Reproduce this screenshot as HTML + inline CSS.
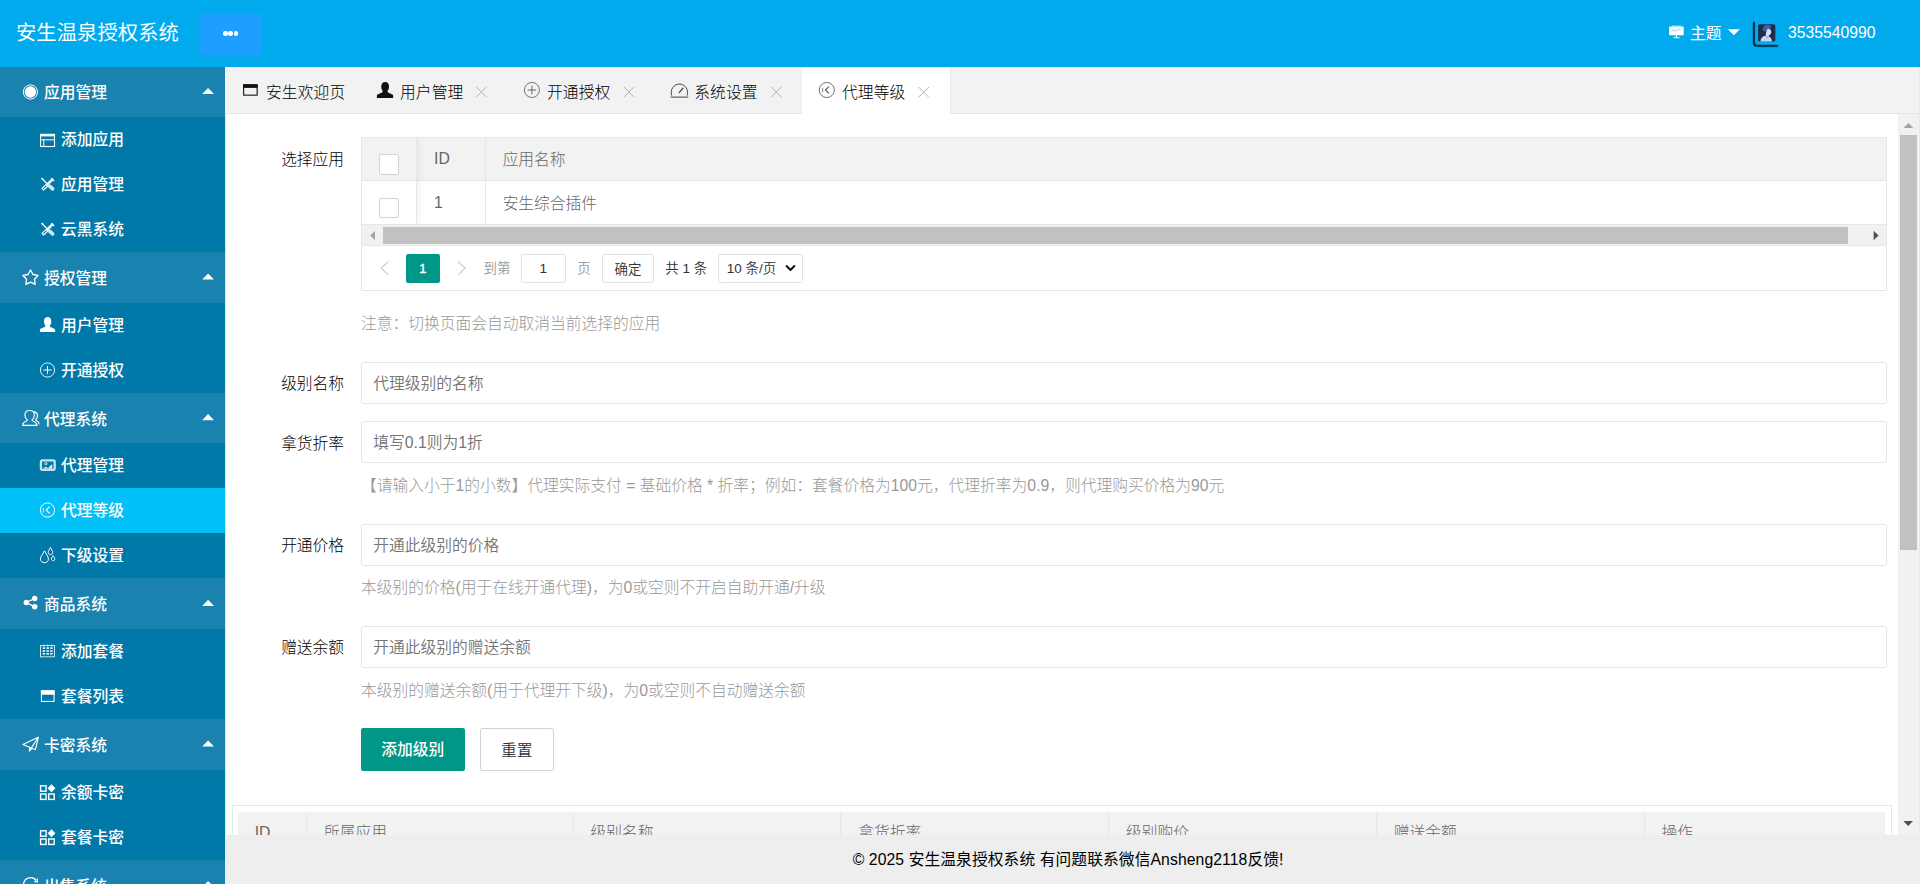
<!DOCTYPE html>
<html lang="zh-CN">
<head>
<meta charset="utf-8">
<title>安生温泉授权系统</title>
<style>
*{box-sizing:border-box;margin:0;padding:0}
html{width:1920px;height:884px;overflow:hidden;background:#fff}
body{zoom:1.125;width:1706.67px;height:785.78px;overflow:hidden;position:relative;font-family:"Liberation Sans","Noto Sans CJK SC",sans-serif;font-size:14px;line-height:24px;color:#000}
svg{display:block}
/* header */
#hd{position:absolute;left:0;top:0;width:1706.67px;height:59.7px;background:#01aaed;color:#fff;z-index:5}
#logo{position:absolute;left:14.2px;letter-spacing:.1px;top:0;height:60px;line-height:58.8px;font-size:18px;white-space:nowrap}
#more{position:absolute;left:177.8px;top:11.6px;width:54px;height:37.3px;background:#1e9fff;border-radius:2px}
#more i{position:absolute;top:16.1px;width:3.9px;height:3.9px;border-radius:50%;background:#fff}
#theme{position:absolute;left:1502.2px;top:0;line-height:60px;font-size:14px;white-space:nowrap}
#uname{position:absolute;left:1589.3px;top:0;line-height:59.4px;font-size:14px;white-space:nowrap}
/* sidebar */
#side{position:absolute;left:0;top:59px;width:200px;height:727px;background:#0078a8;color:#fff;overflow:hidden}
.p{position:relative;height:45px;line-height:48.3px;overflow:hidden;background:#1982ae;padding-left:39.1px;font-size:14px;white-space:nowrap;margin-bottom:0}
.c{position:relative;height:40px;line-height:40.9px;overflow:hidden;padding-left:54.2px;font-size:14px;white-space:nowrap}
.c.on{background:#00c0f7}
/* tabs */
#tabs{position:absolute;left:200px;top:59.7px;width:1506.67px;height:41.3px;background:#f2f2f2;border-bottom:1px solid #e6e6e6}
.tab{position:absolute;top:0;height:41px;line-height:45.6px;overflow:hidden;font-size:14px;color:#000;white-space:nowrap;letter-spacing:.12px}
#tabon{position:absolute;left:512px;top:1px;width:133.2px;height:41.3px;background:#fff;border-left:1px solid #eee;border-right:1px solid #e6e6e6}
/* content */
#main{position:absolute;left:200px;top:101px;width:1506.67px;height:641.3px;background:#fff;border-left:1px solid #e6e6e6;overflow:hidden}
#foot{position:absolute;left:200px;top:742.2px;width:1506.67px;height:44px;background:#eee;text-align:center;line-height:44px;font-size:14px;color:#000;padding-right:7.8px;letter-spacing:.07px}

/* form */
#form{position:absolute;left:10px;top:21px;width:1466.4px}
.item{position:relative;margin-bottom:15px;min-height:38px}
.item:after{content:"";display:block;clear:both}
.lab{position:absolute;left:0;top:0;width:110px;padding:10.1px 15px 7.3px;line-height:20px;text-align:right;color:#000;font-size:14px}
.blk{margin-left:110px;min-height:36px}
.inp{display:block;width:100%;height:37.4px;margin-bottom:.6px;line-height:38.2px;overflow:hidden;border:1px solid #e6e6e6;border-radius:2px;background:#fff;padding-left:10px;font-size:14px;color:#757575}
.mid{display:block;padding:9.9px 0 8.1px;line-height:20px;color:#999;font-size:14px;white-space:nowrap}
.btn{display:inline-block;vertical-align:top;height:38px;margin-top:-.4px;line-height:39.8px;overflow:hidden;padding:0 18px;background:#009688;color:#fff;font-size:14px;border-radius:2px;white-space:nowrap}
.btn.pri{background:#fff;color:#333;border:1px solid #d2d2d2;line-height:39.4px;margin-left:13.6px}
/* table 1 */
#tv{position:relative;border:1px solid #e6e6e6;height:136.8px;margin-bottom:9.6px;color:#666;font-size:14px;background:#fff}
#tv .hr{position:absolute;left:0;top:0;right:0;height:37.9px;background:#f2f2f2;border-bottom:1px solid #e6e6e6}
#tv .r1{position:absolute;left:0;top:37.9px;right:0;height:38.9px;border-bottom:1px solid #e6e6e6}
#tv .cell{position:absolute;top:0;bottom:0;line-height:37.4px;padding-left:15px;border-right:1px solid #e6e6e6;white-space:nowrap}
#tv .cb{position:absolute;left:15.2px;width:18px;height:18px;border:1px solid #d2d2d2;border-radius:2px;background:#fff}
#tv .sb{position:absolute;left:0;right:0;top:76.8px;height:18.1px;background:#f1f1f1}
#tv .sb .th{position:absolute;left:19px;right:34px;top:2px;height:15.1px;background:#c1c1c1}
#tv .pg{position:absolute;left:0;right:0;top:94.9px;height:39.9px;border-top:1px solid #e6e6e6;font-size:12px;color:#333}
#tv .pg>*{position:absolute;top:7px;height:26px;line-height:26px;white-space:nowrap}
/* card */
#card{position:absolute;left:5.2px;top:614.5px;width:1476px;height:80px;border:1px solid #e6e6e6}
#card .hd2{position:absolute;left:4.4px;top:5.3px;width:1464.6px;height:39px;background:#f2f2f2;color:#666;font-size:14px}
#card .hd2 span{position:absolute;top:0;height:39px;line-height:38px;padding-left:15px;border-right:1px solid #e6e6e6;white-space:nowrap}
/* scrollbar */
#vs{position:absolute;left:1486.3px;top:0;width:18.6px;height:642px;background:#f1f1f1}
#vs .th{position:absolute;left:1.6px;top:19px;width:15.1px;height:368.5px;background:#c1c1c1}
#vline{position:absolute;left:1705.8px;top:59.7px;width:1px;height:682.5px;background:#e9e9e9;z-index:4}
#tv .fx{position:absolute;left:0;top:0;width:49px;height:76.8px;box-shadow:0 -1px 8px rgba(0,0,0,.08);clip-path:inset(0 -12px 0 0);pointer-events:none}
#tv .r1 .cell{line-height:39.8px}
.z{position:relative;top:1.1px}
#main{font-weight:350}
#tv .hr,#tv .r1,#card,.mid{font-weight:300}
.lab,#tabs{font-weight:300}
#side{font-weight:500}
.btn{font-weight:500}
.btn.pri{font-weight:350}
</style>
</head>
<body>
<div id="hd">
  <div id="logo">安生温泉授权系统</div>
  <div id="more"><i style="left:20.55px"></i><i style="left:25.25px"></i><i style="left:29.95px"></i></div>
  <div id="theme">主题</div>
  <div id="uname">3535540990</div>
</div>
<div id="side">
  <div class="p">应用管理</div>
  <div class="c">添加应用</div>
  <div class="c">应用管理</div>
  <div class="c">云黑系统</div>
  <div class="p">授权管理</div>
  <div class="c">用户管理</div>
  <div class="c">开通授权</div>
  <div class="p">代理系统</div>
  <div class="c">代理管理</div>
  <div class="c on">代理等级</div>
  <div class="c">下级设置</div>
  <div class="p">商品系统</div>
  <div class="c">添加套餐</div>
  <div class="c">套餐列表</div>
  <div class="p">卡密系统</div>
  <div class="c">余额卡密</div>
  <div class="c">套餐卡密</div>
  <div class="p">出售系统</div>
</div>
<div id="tabs">
  <div id="tabon"></div>
  <div class="tab" style="left:36.4px">安生欢迎页</div>
  <div class="tab" style="left:155.5px">用户管理</div>
  <div class="tab" style="left:286.2px">开通授权</div>
  <div class="tab" style="left:417px">系统设置</div>
  <div class="tab" style="left:548.4px">代理等级</div>
</div>
<div id="main">
  <div id="form">
    <div class="item">
      <div class="lab">选择应用</div>
      <div class="blk">
        <div id="tv">
          <div class="hr">
            <div class="cell" style="left:0;width:49px"><span class="cb" style="top:13.7px;height:18.8px"></span></div>
            <div class="cell" style="left:49px;width:61px">ID</div>
            <div class="cell" style="left:110px;width:1245px;border-right:0"><span class="z">应用名称</span></div>
          </div>
          <div class="r1">
            <div class="cell" style="left:0;width:49px"><span class="cb" style="top:15.3px"></span></div>
            <div class="cell" style="left:49px;width:61px">1</div>
            <div class="cell" style="left:110px;width:1245px;border-right:0"><span class="z">安生综合插件</span></div>
          </div>
          <div class="fx"></div>
          <div class="sb"><div class="th"></div></div>
          <div class="pg">
            <span style="left:38.9px;width:30.3px;background:#009688;color:#fff;text-align:center;border-radius:2px;-webkit-text-stroke:.3px #fff">1</span>
            <span style="left:108.1px;color:#999">到第</span>
            <span style="left:141.1px;width:40px;border:1px solid #e2e2e2;border-radius:2px;text-align:center;line-height:24px">1</span>
            <span style="left:191.3px;color:#999">页</span>
            <span style="left:213.1px;width:46.9px;border:1px solid #e2e2e2;border-radius:2px;text-align:center;line-height:27.4px;overflow:hidden">确定</span>
            <span style="left:269.6px">共 1 条</span>
            <span style="left:316.4px;width:75.6px;border:1px solid #e2e2e2;border-radius:2px;padding-left:7px;line-height:24px">10 条/页</span>
          </div>
        </div>
        <div class="mid">注意：切换页面会自动取消当前选择的应用</div>
      </div>
    </div>
    <div class="item"><div class="lab">级别名称</div><div class="blk"><div class="inp">代理级别的名称</div></div></div>
    <div class="item"><div class="lab">拿货折率</div><div class="blk"><div class="inp">填写0.1则为1折</div><div class="mid">【请输入小于1的小数】代理实际支付 = 基础价格 * 折率；例如：套餐价格为100元，代理折率为0.9，则代理购买价格为90元</div></div></div>
    <div class="item"><div class="lab">开通价格</div><div class="blk"><div class="inp">开通此级别的价格</div><div class="mid">本级别的价格(用于在线开通代理)，为0或空则不开启自助开通/升级</div></div></div>
    <div class="item"><div class="lab">赠送余额</div><div class="blk"><div class="inp">开通此级别的赠送余额</div><div class="mid">本级别的赠送余额(用于代理开下级)，为0或空则不自动赠送余额</div></div></div>
    <div class="item"><div class="blk"><span class="btn">添加级别</span><span class="btn pri">重置</span></div></div>
  </div>
  <div id="card">
    <div class="hd2">
      <span style="left:0;width:61.6px">ID</span>
      <span style="left:61.6px;width:237px">所属应用</span>
      <span style="left:298.6px;width:238px">级别名称</span>
      <span style="left:536.6px;width:238px">拿货折率</span>
      <span style="left:774.6px;width:238px">级别购价</span>
      <span style="left:1012.6px;width:238px">赠送余额</span>
      <span style="left:1250.6px;width:214px;border-right:0">操作</span>
    </div>
  </div>
  <div id="vs"><div class="th"></div></div>
</div>
<div id="vline"></div>
<div id="foot">© 2025 安生温泉授权系统 有问题联系微信Ansheng2118反馈!</div>
<!--OV--><svg id="ov" viewBox="0 0 1920 884" style="position:absolute;left:0;top:0;width:1706.67px;height:785.78px;z-index:9;pointer-events:none"><circle cx="30.4" cy="92" r="7.1" fill="none" stroke="#fff" stroke-width="1"/><circle cx="30.4" cy="92" r="5.7" fill="#fff"/>
<rect x="40.6" y="134.4" width="13.9" height="12.1" fill="none" stroke="#fff" stroke-width="1.1"/><rect x="40.1" y="133.9" width="14.9" height="2.5" fill="#fff"/><rect x="40.1" y="139.2" width="14.9" height="1.2" fill="#fff" opacity=".85"/><rect x="43.2" y="139.6" width="1.1" height="7" fill="#fff" opacity=".9"/>
<path d="M42.00 178.60 L47.60 184.20" stroke="#fff" stroke-width="1.3" fill="none" stroke-linecap="round"/><path d="M41.20 177.80 L43.60 178.60 L42.00 180.20 Z" fill="#fff"/><path d="M49.60 186.10 L52.60 188.90" stroke="#fff" stroke-width="3.6" fill="none" stroke-linecap="round" opacity=".82"/><path d="M52.20 179.60 L48.30 183.50" stroke="#fff" stroke-width="2.6" fill="none" stroke-linecap="round" opacity=".9"/><path d="M51.20 178.20 L54.00 181.00" stroke="#fff" stroke-width="1.6" fill="none" opacity=".95"/><path d="M46.20 184.40 L47.80 186.00 L43.60 190.00 L42.00 188.40 Z" stroke="#fff" stroke-width="1.1" fill="none" stroke-linejoin="round"/>
<path d="M42.00 223.60 L47.60 229.20" stroke="#fff" stroke-width="1.3" fill="none" stroke-linecap="round"/><path d="M41.20 222.80 L43.60 223.60 L42.00 225.20 Z" fill="#fff"/><path d="M49.60 231.10 L52.60 233.90" stroke="#fff" stroke-width="3.6" fill="none" stroke-linecap="round" opacity=".82"/><path d="M52.20 224.60 L48.30 228.50" stroke="#fff" stroke-width="2.6" fill="none" stroke-linecap="round" opacity=".9"/><path d="M51.20 223.20 L54.00 226.00" stroke="#fff" stroke-width="1.6" fill="none" opacity=".95"/><path d="M46.20 229.40 L47.80 231.00 L43.60 235.00 L42.00 233.40 Z" stroke="#fff" stroke-width="1.1" fill="none" stroke-linejoin="round"/>
<path d="M30.50 270.00 L32.97 274.50 L38.01 275.46 L34.49 279.20 L35.14 284.29 L30.50 282.10 L25.86 284.29 L26.51 279.20 L22.99 275.46 L28.03 274.50Z" fill="none" stroke="#fff" stroke-width="1.35" stroke-linejoin="round"/>
<path d="M47.70 317.10 C50.10 317.10 51.30 318.90 51.30 321.30 C51.30 323.10 50.70 324.50 50.00 325.40 L50.00 326.50 C50.00 327.30 52.90 327.70 55.10 329.30 L55.10 332.10 L39.90 332.10 L39.90 329.30 C42.10 327.70 45.20 327.30 45.20 326.50 L45.20 325.40 C44.50 324.50 44.00 323.10 44.00 321.30 C44.00 318.90 45.30 317.10 47.70 317.10 Z" fill="#fff"/>
<g opacity="1"><circle cx="47.50" cy="370.00" r="7.10" fill="none" stroke="#fff" stroke-width="0.9"/><path d="M43.40 370.00 H51.60 M47.50 365.90 V374.10" stroke="#fff" stroke-width="1.0" fill="none"/></g>
<g fill="none" stroke="#fff" stroke-width="1.15" stroke-linejoin="round" stroke-linecap="round"><path d="M29.6 410.5 C32.6 410.5 34.4 412.6 34.4 415.3 C34.4 417.4 33.3 419 32 419.8 C32 420.3 32.3 420.7 33 421 C35.5 421.9 36.9 423 36.9 425.4 L22.7 425.4 C22.7 423 24 421.9 26.4 421 C27.1 420.7 27.4 420.3 27.4 419.8 C26 419 24.9 417.4 24.9 415.3 C24.9 412.6 26.7 410.5 29.6 410.5Z"/><path d="M34.2 411.9 C36.3 412.3 37.5 414 37.5 416 C37.5 417.6 36.8 418.9 35.7 419.7 C35.7 420.2 36 420.6 36.6 420.8 C38.3 421.5 39 422.4 39 423.9"/></g>
<rect x="40.9" y="460.3" width="13.8" height="9.6" rx="1.6" fill="none" stroke="#fff" stroke-width="2.3" opacity=".78"/><circle cx="45.9" cy="463.6" r="1.15" fill="none" stroke="#fff" stroke-width=".8"/><path d="M43.2 468.6 C44.6 466.6 46.6 466.6 48 468.3 L52.2 464 L52.2 468.8 Z" fill="#fff" opacity=".9"/>
<circle cx="47.50" cy="510.05" r="7.10" fill="none" stroke="#fff" stroke-width="1.0"/><path d="M49.30 506.95 L46.20 510.05 L49.30 513.15" stroke="#fff" stroke-width="1.1" fill="none" stroke-linecap="round" stroke-linejoin="round"/><path d="M43.30 507.85 V512.45" stroke="#fff" stroke-width="1" fill="none" opacity=".75"/>
<g fill="none" stroke="#fff" stroke-width="1" stroke-linejoin="round"><path d="M44.5 550.8 C43 554 40.4 556.6 40.4 559 C40.4 561.2 42.2 562.7 44.5 562.7 C46.8 562.7 48.4 561.2 48.4 559 C48.4 556.6 46 554 44.5 550.8Z"/><path d="M50.4 547.4 C49.6 549.4 48.2 550.9 48.2 552.4 C48.2 553.8 49.2 554.6 50.4 554.6 C51.7 554.6 52.7 553.8 52.7 552.4 C52.7 550.9 51.2 549.4 50.4 547.4Z"/><path d="M53.1 555.6 C52.5 556.9 51.4 557.8 51.4 558.9 C51.4 559.9 52.2 560.6 53.1 560.6 C54.1 560.6 54.8 559.9 54.8 558.9 C54.8 557.8 53.7 556.9 53.1 555.6Z"/></g>
<path d="M34.6 598.5 L26.3 602.5 L34.6 606.8" fill="none" stroke="#fff" stroke-width="1.3"/><circle cx="26.3" cy="602.5" r="2.7" fill="#fff"/><circle cx="34.7" cy="598.5" r="2.7" fill="#fff"/><circle cx="34.7" cy="606.8" r="2.7" fill="#fff"/>
<rect x="40.5" y="645.5" width="14" height="11.3" fill="none" stroke="#fff" stroke-width="1" opacity=".8"/><rect x="43.45" y="644.6" width=".9" height="2" fill="#fff" opacity=".8"/><rect x="42.65" y="647.35" width="2.5" height="1.5" fill="#fff"/><rect x="42.65" y="650.25" width="2.5" height="1.5" fill="#fff"/><rect x="42.65" y="653.05" width="2.5" height="1.5" fill="#fff"/><rect x="47.25" y="644.6" width=".9" height="2" fill="#fff" opacity=".8"/><rect x="46.45" y="647.35" width="2.5" height="1.5" fill="#fff"/><rect x="46.45" y="650.25" width="2.5" height="1.5" fill="#fff"/><rect x="46.45" y="653.05" width="2.5" height="1.5" fill="#fff"/><rect x="50.95" y="644.6" width=".9" height="2" fill="#fff" opacity=".8"/><rect x="50.15" y="647.35" width="2.5" height="1.5" fill="#fff"/><rect x="50.15" y="650.25" width="2.5" height="1.5" fill="#fff"/><rect x="50.15" y="653.05" width="2.5" height="1.5" fill="#fff"/>
<rect x="41.45" y="690.85" width="12.60" height="10.60" fill="none" stroke="#fff" stroke-width="1.1"/><rect x="40.90" y="690.30" width="13.70" height="4.40" fill="#fff"/>
<g fill="none" stroke="#fff" stroke-width="1.15" stroke-linejoin="round" stroke-linecap="round"><path d="M22.9 744.5 L38.3 737.3 L35.4 749.7 L29.6 747.2 Z"/><path d="M29.6 747.2 L29.4 750.9 L38.3 737.3"/><path d="M29.4 750.9 L31.9 748.3"/></g>
<rect x="40.60" y="785.80" width="5.5" height="5.4" fill="none" stroke="#fff" stroke-width="1.4"/><rect x="40.60" y="794.00" width="5.5" height="5.4" fill="none" stroke="#fff" stroke-width="1.4"/><rect x="48.70" y="794.00" width="5.5" height="5.4" fill="none" stroke="#fff" stroke-width="1.4"/><path d="M47.60 788.30 L51.50 784.20 L55.40 788.30 L51.50 792.30 Z" fill="#fff"/>
<rect x="40.60" y="830.80" width="5.5" height="5.4" fill="none" stroke="#fff" stroke-width="1.4"/><rect x="40.60" y="839.00" width="5.5" height="5.4" fill="none" stroke="#fff" stroke-width="1.4"/><rect x="48.70" y="839.00" width="5.5" height="5.4" fill="none" stroke="#fff" stroke-width="1.4"/><path d="M47.60 833.30 L51.50 829.20 L55.40 833.30 L51.50 837.30 Z" fill="#fff"/>
<path d="M23.6 884 A7 7 0 0 1 36.3 880.6" fill="none" stroke="#fff" stroke-width="1.3"/><path d="M34.2 881.6 L37.4 881.9 L37.3 878.6" fill="none" stroke="#fff" stroke-width="1.2"/>
<path d="M202.2 94.00 H214 L208.1 87.90 Z" fill="#fff"/>
<path d="M202.2 279.60 H214 L208.1 273.50 Z" fill="#fff"/>
<path d="M202.2 420.20 H214 L208.1 414.10 Z" fill="#fff"/>
<path d="M202.2 605.90 H214 L208.1 599.80 Z" fill="#fff"/>
<path d="M202.2 746.50 H214 L208.1 740.40 Z" fill="#fff"/>
<path d="M202.2 887.10 H214 L208.1 881.00 Z" fill="#fff"/>
<rect x="243.65" y="84.85" width="13.50" height="10.30" fill="none" stroke="#111" stroke-width="1.1"/><rect x="243.10" y="84.30" width="14.60" height="3.60" fill="#111"/>
<path d="M385.21 82.00 C387.77 82.00 389.05 83.92 389.05 86.48 C389.05 88.40 388.41 89.89 387.66 90.85 L387.66 92.03 C387.66 92.88 390.76 93.31 393.10 95.01 L393.10 98.00 L376.90 98.00 L376.90 95.01 C379.24 93.31 382.55 92.88 382.55 92.03 L382.55 90.85 C381.80 89.89 381.27 88.40 381.27 86.48 C381.27 83.92 382.66 82.00 385.21 82.00 Z" fill="#111"/>
<g opacity="0.75"><circle cx="531.90" cy="90.00" r="7.55" fill="none" stroke="#333" stroke-width="0.85"/><path d="M527.60 90.00 H536.20 M531.90 85.70 V94.30" stroke="#333" stroke-width="0.95" fill="none"/></g>
<g fill="none" stroke="#333" stroke-width="1" stroke-linecap="round" opacity=".9"><path d="M671.6 95.2 A8.3 8.3 0 1 1 687.2 95.2"/><path d="M671 97.2 H687.8" stroke-width="1.2" opacity=".8"/><path d="M679.2 92.6 L683 88.2" stroke-width="1.3"/></g>
<g opacity=".8"><circle cx="826.80" cy="90.00" r="7.55" fill="none" stroke="#333" stroke-width="0.85"/><path d="M828.60 86.90 L825.50 90.00 L828.60 93.10" stroke="#333" stroke-width="1.1" fill="none" stroke-linecap="round" stroke-linejoin="round"/><path d="M822.60 87.80 V92.40" stroke="#333" stroke-width="1" fill="none" opacity=".75"/></g>
<path d="M476.20 86.70 L486.60 97.10 M486.60 86.70 L476.20 97.10" stroke="#b2b2b2" stroke-width="1.0" fill="none"/>
<path d="M623.80 86.70 L634.20 97.10 M634.20 86.70 L623.80 97.10" stroke="#b2b2b2" stroke-width="1.0" fill="none"/>
<path d="M771.10 86.70 L781.50 97.10 M781.50 86.70 L771.10 97.10" stroke="#b2b2b2" stroke-width="1.0" fill="none"/>
<path d="M918.50 87.00 L928.90 97.40 M928.90 87.00 L918.50 97.40" stroke="#b2b2b2" stroke-width="1.0" fill="none"/>
<rect x="1669.1" y="26.4" width="14.6" height="8.8" rx=".8" fill="#fff"/><rect x="1675.9" y="35" width="1.2" height="2.6" fill="#fff"/><rect x="1673.6" y="37.2" width="5.8" height="1" fill="#fff"/><rect x="1671.5" y="25.6" width="9.8" height="1" fill="#fff" opacity=".7"/><path d="M1671.6 31.6 L1674 30 L1676 31.2 L1678.4 29.2 L1680.8 30.4" fill="none" stroke="#01aaed" stroke-width=".7" opacity=".7"/>
<path d="M1727.9 29.2 H1739.9 L1733.9 35.3 Z" fill="#fff"/>
<path d="M1753.9 22.6 V42.6 Q1753.9 45.9 1757.2 45.9 H1777.2" fill="none" stroke="#03101d" stroke-width="2.6" stroke-linecap="round" opacity=".35"/><path d="M1753.9 22.8 V42.6 Q1753.9 45.9 1757.2 45.9 H1777" fill="none" stroke="#020a14" stroke-width="1.3" stroke-linecap="round" opacity=".9"/><rect x="1758.1" y="24.2" width="17.2" height="17.4" rx="1.7" fill="#1f2d48"/><path d="M1762.8 30.2 C1762.2 26.6 1765 24.7 1767.6 24.7 C1769.8 24.7 1771.2 25.8 1771.4 27.4 L1769.9 28.7 L1767.6 28.9 L1765.4 31.8 Z" fill="#3e5eb2"/><path d="M1767.4 29 C1769 28.5 1771.1 29.4 1771.3 31.4 C1771.3 33.6 1769.9 35 1768.7 35.2 L1768.8 36.8 L1765.7 36.8 C1766 34 1765.8 31.6 1767.4 29 Z" fill="#d8dff5"/><path d="M1760.4 41.6 C1760.6 38 1762.6 36.2 1765.4 35.8 L1768.9 36.5 C1770.9 37.4 1771.9 39 1771.9 41.6 Z" fill="#c8d6f6"/><path d="M1765.6 35.9 L1768.4 38.6" stroke="#5f78c8" stroke-width=".7" fill="none"/>
<path d="M375 231 V240 L370.2 235.5Z" fill="#a3a3a3"/><path d="M1873.6 230.8 V240.2 L1878.6 235.5Z" fill="#505050"/>
<path d="M388.2 261.8 L381.2 268.3 L388.2 274.8" fill="none" stroke="#d2d2d2" stroke-width="1.3"/><path d="M458.2 261.8 L465.2 268.3 L458.2 274.8" fill="none" stroke="#d2d2d2" stroke-width="1.3"/>
<path d="M786.6 266 L790.5 270 L794.4 266" fill="none" stroke="#111" stroke-width="2" stroke-linecap="round" stroke-linejoin="round"/>
<path d="M1903.6 128 H1913.2 L1908.4 122.9Z" fill="#a3a3a3"/><path d="M1903.4 821 H1913 L1908.2 826Z" fill="#505050"/></svg><!--/OV-->
</body>
</html>
